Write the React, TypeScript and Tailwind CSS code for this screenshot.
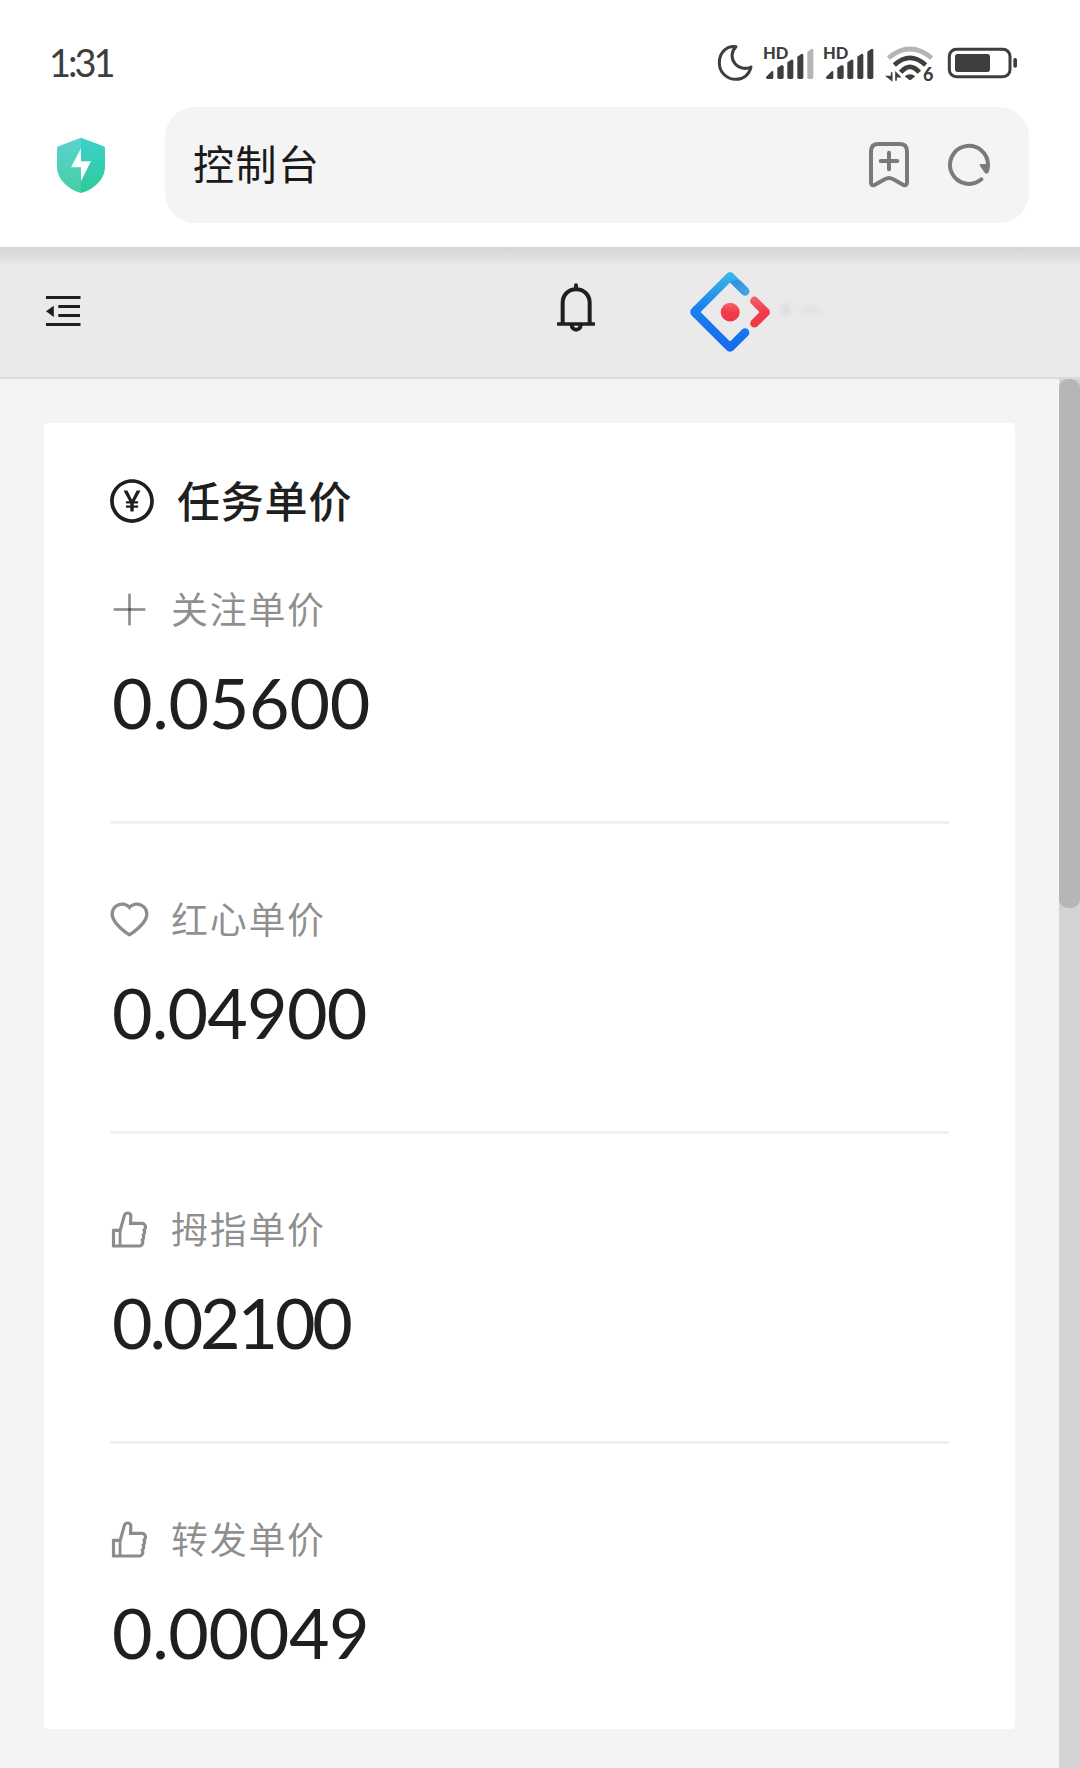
import type { ReactNode } from "react";
import { AiOutlineHeart, AiOutlineLike, AiOutlinePayCircle } from "react-icons/ai";

type PriceItem = {
    label: string;
    value: string;
    icon: ReactNode;
    tracking: string;
};

const PlusIcon = () => (
    <svg viewBox="0 0 1024 1024" width="45" height="45" fill="currentColor">
        <rect x="482" y="152" width="60" height="720" />
        <rect x="152" y="482" width="720" height="60" />
    </svg>
);

const prices: PriceItem[] = [
    { label: "关注单价", value: "0.05600", icon: <PlusIcon />, tracking: "tracking-[-0.3px]" },
    { label: "红心单价", value: "0.04900", icon: <AiOutlineHeart size={45} />, tracking: "tracking-[-0.8px]" },
    { label: "拇指单价", value: "0.02100", icon: <AiOutlineLike size={45} />, tracking: "tracking-[-3.2px]" },
    { label: "转发单价", value: "0.00049", icon: <AiOutlineLike size={45} />, tracking: "tracking-[-0.4px]" },
];

function StatusIcons() {
    return (
        <svg width="340" height="70" viewBox="0 0 1020 210" fill="none">
            {/* moon */}
            <path
                d="M108 50C80 46 58 68 58 98C58 128 81 148 108 148C130 148 148 134 153 111C136 119 116 115 105 101C92 85 94 64 108 50Z"
                stroke="#3e3e3e"
                strokeWidth="9"
                strokeLinejoin="round"
            />
            {/* mobile signal, twice */}
            {[0, 180].map((dx) => (
                <g key={dx} transform={`translate(${dx} 0)`} fill="#3e3e3e">
                    <text
                        x="189"
                        y="87"
                        fontSize="50"
                        fontWeight="900"
                        textLength="76"
                        lengthAdjust="spacingAndGlyphs"
                        className="font-['Lato',sans-serif]"
                    >
                        HD
                    </text>
                    <path d="M198 141L215 124Q220 121 220 127V143Q220 147 216 147H203Q197 147 198 141Z" />
                    <path d="M232 113L244 106Q251 104 251 110V142Q251 147 246 147H237Q232 147 232 142Z" />
                    <path d="M262 97L274 89Q280 87 280 93V142Q280 147 275 147H267Q262 147 262 142Z" />
                    <path d="M292 80L304 72Q310 70 310 76V142Q310 147 305 147H297Q292 147 292 142Z" />
                    <path
                        d="M322 65L334 57Q340 55 340 61V142Q340 147 335 147H327Q322 147 322 142Z"
                        fill={dx === 0 ? "#b5b5b5" : "#3e3e3e"}
                    />
                </g>
            ))}
            {/* wifi */}
            <g strokeWidth="14">
                <path d="M565 84Q630 30 695 84" stroke="#b5b5b5" />
                <path d="M583 105Q630 62 677 105" stroke="#3e3e3e" />
                <path d="M602 127Q630 94 658 127" stroke="#3e3e3e" />
            </g>
            <path d="M614 139Q630 126 646 139L633 149Q630 151 627 149Z" fill="#3e3e3e" />
            <path d="M562 140H575V150ZM575 127V152M588 152V127M588 129V140H599Z" fill="#3e3e3e" stroke="#3e3e3e" strokeWidth="5" />
            <text x="669" y="153" fontSize="54" fontWeight="900" fill="#3e3e3e" className="font-['Lato',sans-serif]">
                6
            </text>
            {/* battery */}
            <rect x="748" y="58" width="182" height="82" rx="21" stroke="#3e3e3e" strokeWidth="9" />
            <rect x="765" y="72" width="105" height="54" rx="8" fill="#3e3e3e" />
            <rect x="940" y="84" width="11" height="29" rx="5" fill="#3e3e3e" />
        </svg>
    );
}

function ShieldIcon() {
    return (
        <svg width="50" height="57" viewBox="168 321 150 171" className="shrink-0">
            <defs>
                <linearGradient id="shieldLeft" x1="0" y1="0" x2="0" y2="1">
                    <stop offset="0" stopColor="#5dd2cf" />
                    <stop offset="1" stopColor="#43cfa5" />
                </linearGradient>
                <linearGradient id="shieldRight" x1="0" y1="0" x2="0" y2="1">
                    <stop offset="0" stopColor="#3ed0cb" />
                    <stop offset="1" stopColor="#2ccb98" />
                </linearGradient>
            </defs>
            <path d="M243 323L175 349Q171 351 171 355V410C171 448 205 478 243 489Z" fill="url(#shieldLeft)" />
            <path d="M243 323L311 349Q315 351 315 355V410C315 448 281 478 243 489Z" fill="url(#shieldRight)" />
            <path d="M243 355L213 412H243V453L273 394H243Z" fill="#fff" />
        </svg>
    );
}

function BookmarkIcon() {
    return (
        <svg width="42" height="48" viewBox="81 123 126 144" fill="none" stroke="#7a7a7a" strokeWidth="12" strokeLinecap="round" strokeLinejoin="round">
            <path d="M112 132H176Q198 132 198 154V247Q198 260 186 254L157 238Q144 230 131 238L102 254Q90 260 90 247V154Q90 132 112 132Z" />
            <path d="M144 158V208M119 183H169" />
        </svg>
    );
}

function ReloadIcon() {
    return (
        <svg width="44" height="44" viewBox="318 129 132 132" fill="none">
            <path d="M421 238A57 57 0 1 1 441 195" stroke="#7a7a7a" strokeWidth="12" strokeLinecap="round" />
            <path d="M419 192H447Q447 207 443 217Q437 225 430 217L417 198Q414 192 419 192Z" fill="#7a7a7a" />
        </svg>
    );
}

function FoldIcon() {
    return (
        <svg width="36" height="32" viewBox="0 0 36 32" fill="#1f1f1f" className="mb-0.5">
            <rect x="1" y="1" width="34.5" height="3" />
            <rect x="13.3" y="10" width="21.7" height="3" />
            <rect x="13.3" y="19" width="21.7" height="3" />
            <rect x="1" y="28" width="34.5" height="3" />
            <path d="M1 16.3L8.8 10.7V21.9Z" />
        </svg>
    );
}

function BellIcon() {
    return (
        <svg width="38" height="50" viewBox="80 99 114 150" fill="none" stroke="#1f1f1f" strokeWidth="12">
            <path d="M97 221V159C97 134 115 118 137 118C160 118 178 134 178 159V221" />
            <path d="M84 222H190" strokeLinecap="round" strokeWidth="11" />
            <path d="M137 117V106" strokeLinecap="round" />
            <path d="M124 224C124 244 151 244 151 224" />
        </svg>
    );
}

function Logo() {
    return (
        <svg width="80" height="80" viewBox="0 0 200 200">
            <defs>
                <linearGradient id="logoBlue" x1="0.5" y1="0" x2="0.45" y2="1">
                    <stop offset="0" stopColor="#3bb9e6" />
                    <stop offset="0.45" stopColor="#1c82ee" />
                    <stop offset="1" stopColor="#1568ee" />
                </linearGradient>
                <linearGradient id="logoArm" x1="0" y1="0" x2="1" y2="1">
                    <stop offset="0" stopColor="#2f8edb" />
                    <stop offset="1" stopColor="#45a8e4" />
                </linearGradient>
                <linearGradient id="logoRed" x1="0.5" y1="0" x2="0.5" y2="1">
                    <stop offset="0" stopColor="#f0666d" />
                    <stop offset="0.5" stopColor="#f53a4c" />
                    <stop offset="1" stopColor="#ec3847" />
                </linearGradient>
            </defs>
            <path
                d="M91.6 4.2L4.2 91.5C-.5 96.2-.5 103.8 4.2 108.5L91.6 195.8C96.3 200.5 103.9 200.5 108.6 195.8L145.2 159.2C149.4 155 149.4 148.2 145.2 144C141 139.8 134.2 139.8 130 144L102.2 171.7C101 172.9 99.3 172.9 98.1 171.7L28.3 102C27.1 100.8 27.1 99.1 28.3 97.9L98.1 28.1C99.3 27 101 27 102.2 28.1L130 55.9C134.2 60.1 141 60.1 145.2 55.9C149.4 51.7 149.4 44.9 145.2 40.7L108.6 4.1C103.9-.5 96.3-.5 91.6 4.2Z"
                fill="url(#logoBlue)"
            />
            <path
                d="M100 27.5C101 27 101.8 27.7 102.2 28.1L130 55.9C134.2 60.1 141 60.1 145.2 55.9C149.4 51.7 149.4 44.9 145.2 40.7L127 22.5C119 18 107 20 100 27.5Z"
                fill="url(#logoArm)"
            />
            <path
                d="M153.7 135.9C157.9 140.1 164.7 140.1 168.9 135.9L196 108.8C200.7 104.1 200.7 96.6 196 91.9L168.7 64.7C164.5 60.5 157.6 60.5 153.4 64.7C149.2 68.9 149.2 75.8 153.4 80L171.9 98.4C173 99.5 173 101.3 171.9 102.5L153.7 120.6C149.5 124.8 149.5 131.6 153.7 135.9Z"
                fill="url(#logoRed)"
            />
            <circle cx="100.5" cy="100.4" r="23.6" fill="url(#logoRed)" />
        </svg>
    );
}

function PriceRow({ item, first, last }: { item: PriceItem; first: boolean; last: boolean }) {
    return (
        <div className={`${first ? "pt-[47px]" : "pt-[65px]"} ${last ? "pb-14" : "border-b-[3px] border-[#f0f0f0] pb-[78px]"}`}>
            <div className="-ml-[3px] flex h-[60px] items-center gap-[19px] text-black/45">
                {item.icon}
                <span className="pb-0.5 text-[37px] leading-[58px] tracking-[1.7px]">{item.label}</span>
            </div>
            <div className={`mt-6 h-20 pl-0.5 font-['Lato',sans-serif] text-[70px] leading-[78px] text-[#1f1f1f] ${item.tracking}`}>
                {item.value}
            </div>
        </div>
    );
}

export default function App() {
    return (
        <div className="flex h-[1768px] w-[1080px] flex-col overflow-hidden bg-[#f4f4f4] font-['Noto_Sans_CJK_SC',sans-serif]">
            {/* Phone status bar and address bar */}
            <div className="h-[247px] shrink-0 bg-white">
                <div className="flex h-[107px] justify-between pt-[30px] pr-10 pl-[49px]">
                    <span className="font-['Lato',sans-serif] text-[38px] leading-[65px] tracking-[-3px] text-[#3e3e3e]">1:31</span>
                    <StatusIcons />
                </div>
                <div className="flex items-center pr-[51px] pl-14">
                    <ShieldIcon />
                    <div className="ml-[59px] flex h-[116px] flex-1 items-center rounded-[30px] bg-[#f4f4f4] pr-[38px] pl-7">
                        <span className="flex-1 pb-1 text-[41px] tracking-[1.5px] text-[#1a1a1a]">控制台</span>
                        <BookmarkIcon />
                        <div className="ml-[37px]">
                            <ReloadIcon />
                        </div>
                    </div>
                </div>
            </div>

            {/* App header */}
            <header className="flex h-[132px] shrink-0 items-center border-b-2 border-[#dadada] bg-[#eaeaea] bg-linear-to-b from-[#d6d6d6] to-[#eaeaea] to-[20px] pl-[45px]">
                <FoldIcon />
                <div className="mb-2 ml-[476px]">
                    <BellIcon />
                </div>
                <div className="ml-[95px]">
                    <Logo />
                </div>
                <div className="mb-1 ml-3 flex items-center gap-2.5 blur-[2px]">
                    <div className="h-3.5 w-2 rounded-full bg-[#dedede]" />
                    <div className="h-2 w-5 rounded-full bg-[#e2e2e2]" />
                </div>
            </header>

            <div className="flex min-h-0 flex-1">
                <main className="flex-1 pt-11 pr-11 pl-11">
                    <section className="rounded bg-white px-[66px] pt-[47px]">
                        <div className="-ml-[3px] flex h-[62px] items-center gap-5 text-[#1f1f1f]">
                            <AiOutlinePayCircle size={50} />
                            <h1 className="pb-1 text-[43px] leading-[56px] font-medium tracking-[0.8px]">任务单价</h1>
                        </div>
                        {prices.map((item, i) => (
                            <PriceRow key={item.label} item={item} first={i === 0} last={i === prices.length - 1} />
                        ))}
                    </section>
                </main>
                {/* Scrollbar */}
                <div className="w-[21px] bg-[#d3d3d3]">
                    <div className="h-[529px] rounded-[9px] bg-[#b5b6b6]" />
                </div>
            </div>
        </div>
    );
}
